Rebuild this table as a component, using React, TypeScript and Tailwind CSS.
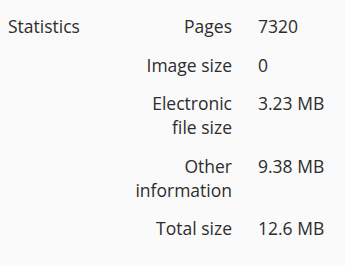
export default function App() {
  const rows: [string, string][] = [
    ["Pages", "7320"],
    ["Image size", "0"],
    ["Electronic file size", "3.23 MB"],
    ["Other information", "9.38 MB"],
    ["Total size", "12.6 MB"],
  ];
  return (
    <div
      className="w-[345px] h-[266px] bg-[#fafafa] text-[#2d2d2d] text-[17.5px] leading-[24px] flex"
      style={{ fontFamily: '"Open Sans", sans-serif' }}
    >
      <div className="w-[132px] pl-[8px] pt-[14px]">Statistics</div>
      <div className="flex flex-col pt-[6.75px]">
        {rows.map(([k, v]) => (
          <div key={k} className="flex py-[7.25px]">
            <div className="w-[100px] text-right">{k}</div>
            <div className="pl-[26px]">{v}</div>
          </div>
        ))}
      </div>
    </div>
  );
}
